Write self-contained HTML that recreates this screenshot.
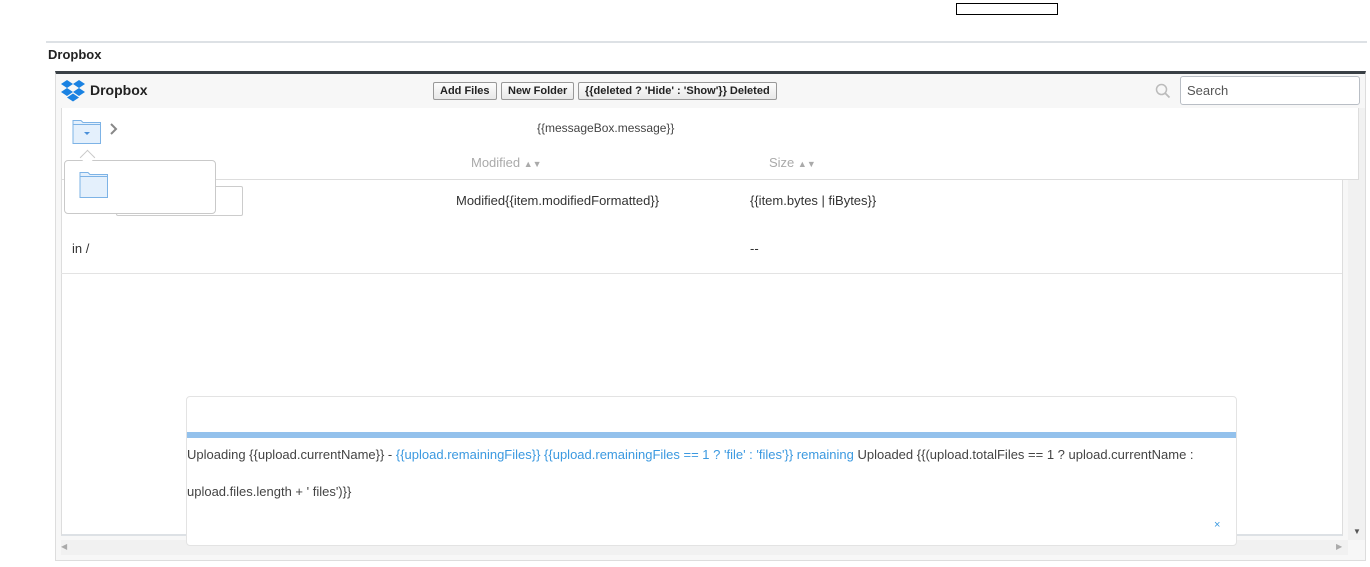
<!DOCTYPE html>
<html><head><meta charset="utf-8"><style>
*{box-sizing:border-box;margin:0;padding:0}
body{width:1370px;height:567px;background:#fff;font-family:"Liberation Sans",Arial,sans-serif;position:relative;overflow:hidden;color:#333}
.a{position:absolute}
.btn{position:absolute;top:82px;height:18px;border:1px solid #999;border-radius:2px;background:linear-gradient(#fdfdfd,#e8e8e8);font:bold 11px "Liberation Sans",Arial,sans-serif;color:#222;line-height:16px;padding:0 6px;white-space:nowrap}
.t{font-size:13px;white-space:nowrap}
.blue{color:#3b99e0}
</style></head><body>
<div class="a" style="left:956px;top:3px;width:102px;height:12px;border:1px solid #000"></div>
<div class="a" style="left:46px;top:41px;width:1321px;height:2px;background:#dde1e5"></div>
<div class="a" style="left:48px;top:47px;font-weight:bold;font-size:13px;color:#222">Dropbox</div>
<div class="a" style="left:55px;top:71px;width:1311px;height:490px;border:1px solid #ddd;border-top:3px solid #3a4046;background:#f7f7f7"></div>
<svg class="a" style="left:61px;top:80px" width="24" height="22" viewBox="0 0 24 22"><g fill="#1a82e2"><path d="M6 0 0 4l6 4 6-4z"/><path d="M18 0l-6 4 6 4 6-4z"/><path d="M0 12l6 4 6-4-6-4z"/><path d="M24 12l-6 4-6-4 6-4z"/><path d="M6 17.5l6 4 6-4-6-4z"/></g></svg>
<div class="a" style="left:90px;top:82px;font-weight:bold;font-size:14px;color:#222">Dropbox</div>
<div class="btn" style="left:433px">Add Files</div>
<div class="btn" style="left:501px">New Folder</div>
<div class="btn" style="left:578px">{{deleted ? 'Hide' : 'Show'}} Deleted</div>
<svg class="a" style="left:1155px;top:83px" width="16" height="16" viewBox="0 0 16 16"><circle cx="6.5" cy="6.5" r="5" fill="none" stroke="#bbb" stroke-width="1.5"/><path d="M10 10l4.5 4.5" stroke="#bbb" stroke-width="1.8"/></svg>
<div class="a" style="left:1180px;top:76px;width:180px;height:29px;border:1px solid #b9bec5;border-radius:3px;background:#fff;font-size:13px;color:#555;padding:6px 0 0 6px">Search</div>
<div class="a" style="left:61px;top:108px;width:1282px;height:428px;background:#fff;border-left:1px solid #ddd;border-right:1px solid #ddd;border-bottom:2px solid #dde1e5"></div>
<div class="a" style="left:61px;top:179px;width:1281px;height:1px;background:#e3e3e3"></div>
<div class="a" style="left:61px;top:273px;width:1281px;height:1px;background:#e3e3e3"></div>
<div class="a" style="left:1348px;top:108px;width:17px;height:432px;background:#f1f1f1"></div>
<div class="a" style="left:1353px;top:527px;font-size:8px;color:#555">▼</div>
<div class="a" style="left:61px;top:540px;width:1287px;height:15px;background:#f1f1f1"></div>
<div class="a" style="left:61px;top:542px;font-size:8px;color:#aaa">◀</div>
<div class="a" style="left:1336px;top:542px;font-size:8px;color:#aaa">▶</div>
<div class="a" style="left:61px;top:108px;width:1298px;height:72px;background:#fff;border:1px solid #ddd;border-top:none"></div>
<div class="a t" style="left:537px;top:121px;font-size:12px;color:#444">{{messageBox.message}}</div>
<svg class="a" style="left:72px;top:117px" width="30" height="28" viewBox="0 0 30 28"><path d="M1 3.5h8l2 2h17.5v21H1z" fill="#e4f0fc" stroke="#7db3e6"/><path d="M1 7.5h27.5" stroke="#7db3e6"/><path d="M12 15h6l-3 3z" fill="#4a90d9"/></svg>
<svg class="a" style="left:109px;top:122px" width="10" height="14" viewBox="0 0 10 14"><path d="M2 2l5 5-5 5" fill="none" stroke="#888" stroke-width="2"/></svg>
<div class="a t" style="left:471px;top:155px;color:#aaa;font-size:13px">Modified <span style="font-size:9px">▲▼</span></div>
<div class="a t" style="left:769px;top:155px;color:#aaa;font-size:13px">Size <span style="font-size:9px">▲▼</span></div>
<div class="a" style="left:116px;top:186px;width:127px;height:30px;border:1px solid #ccc;border-radius:2px"></div>
<div class="a t" style="left:456px;top:193px;color:#333">Modified{{item.modifiedFormatted}}</div>
<div class="a t" style="left:750px;top:193px;color:#333">{{item.bytes | fiBytes}}</div>
<div class="a t" style="left:72px;top:241px">in /</div>
<div class="a t" style="left:750px;top:241px">--</div>
<div class="a" style="left:64px;top:160px;width:152px;height:54px;background:#fff;border:1px solid #c9c9c9;border-radius:4px"></div>
<div class="a" style="left:82px;top:152px;width:11px;height:11px;background:#fff;border-left:1px solid #c9c9c9;border-top:1px solid #c9c9c9;transform:rotate(45deg)"></div>
<svg class="a" style="left:79px;top:171px" width="30" height="28" viewBox="0 0 30 28"><path d="M1 1.5h8l2 2h17.5v23H1z" fill="#e4f0fc" stroke="#7db3e6"/><path d="M1 5.5h27.5" stroke="#7db3e6"/></svg>
<div class="a" style="left:186px;top:396px;width:1051px;height:150px;background:#fff;border:1px solid #e3e3e3;border-radius:4px"></div>
<div class="a" style="left:187px;top:432px;width:1049px;height:6px;background:#93c1ec"></div>
<div class="a t" style="left:187px;top:447px;color:#444">Uploading {{upload.currentName}} - <span class="blue">{{upload.remainingFiles}} {{upload.remainingFiles == 1 ? 'file' : 'files'}} remaining</span> Uploaded {{(upload.totalFiles == 1 ? upload.currentName :</div>
<div class="a t" style="left:187px;top:484px;color:#444">upload.files.length + ' files')}}</div>
<div class="a" style="left:1214px;top:519px;font-size:11px;color:#3b99e0">×</div>
<div class="a" style="left:55px;top:560px;width:1311px;height:1px;background:#ddd"></div>
</body></html>
